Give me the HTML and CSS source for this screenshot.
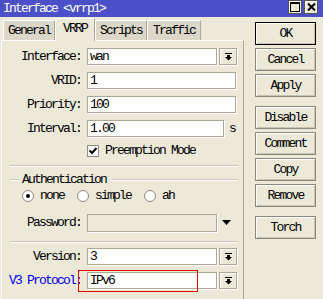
FILE: index.html
```html
<!DOCTYPE html>
<html lang="en">
<head>
  <meta charset="UTF-8">
  <title>Interface &lt;vrrp1&gt;</title>
  <link rel="stylesheet" href="styles.css">
</head>
<body>
  <div class="window">
    <div class="titlebar">
      <span class="title">Interface &lt;vrrp1&gt;</span>
      <div class="win-btns">
        <span class="wbtn">
          <svg width="10" height="10" viewBox="0 0 10 10"><rect x="0.5" y="0.5" width="9" height="9" fill="none" stroke="#000"/><rect x="0" y="0" width="10" height="2" fill="#000"/></svg>
        </span>
        <span class="wbtn">
          <svg width="9" height="8" viewBox="0 0 9 8"><path d="M1 0.5 L8 7.5 M8 0.5 L1 7.5" stroke="#000" stroke-width="2"/></svg>
        </span>
      </div>
    </div>

    <div class="main">
      <div class="left">
        <div class="tabs">
          <div class="tab tab-general">General</div>
          <div class="tab tab-vrrp active">VRRP</div>
          <div class="tab tab-scripts">Scripts</div>
          <div class="tab tab-traffic">Traffic</div>
        </div>

        <div class="panel">
          <div class="row">
            <label>Interface:</label>
            <div class="field short">wan</div>
            <div class="dd">
              <svg width="7" height="8" viewBox="0 0 7 8"><rect x="0" y="0" width="7" height="1" fill="#000"/><rect x="2" y="2" width="3" height="2" fill="#000"/><path d="M0 4 H7 L3.5 7.5 Z" fill="#000"/></svg>
            </div>
          </div>
          <div class="row">
            <label>VRID:</label>
            <div class="field">1</div>
          </div>
          <div class="row">
            <label>Priority:</label>
            <div class="field">100</div>
          </div>
          <div class="row">
            <label>Interval:</label>
            <div class="field interval">1.00</div>
            <span class="unit">s</span>
          </div>
          <div class="row check-row">
            <span class="checkbox">
              <svg width="12" height="12" viewBox="0 0 12 12"><path d="M2.5 5.5 L5 8 L9.5 3" fill="none" stroke="#000" stroke-width="2"/></svg>
            </span>
            <span>Preemption Mode</span>
          </div>

          <div class="sep"></div>

          <div class="group-head">
            <span class="line lead"></span>
            <span class="group-title">Authentication</span>
            <span class="line"></span>
          </div>
          <div class="radios">
            <span class="radio on"><i></i></span><span class="radio-label">none</span>
            <span class="radio"></span><span class="radio-label">simple</span>
            <span class="radio"></span><span class="radio-label">ah</span>
          </div>

          <div class="row pass-row">
            <label>Password:</label>
            <div class="field short disabled"></div>
            <span class="arrow-only">
              <svg width="9" height="5" viewBox="0 0 9 5"><path d="M0 0 H9 L4.5 5 Z" fill="#000"/></svg>
            </span>
          </div>

          <div class="sep sep-low"></div>

          <div class="row">
            <label>Version:</label>
            <div class="field short">3</div>
            <div class="dd">
              <svg width="7" height="8" viewBox="0 0 7 8"><rect x="0" y="0" width="7" height="1" fill="#000"/><rect x="2" y="2" width="3" height="2" fill="#000"/><path d="M0 4 H7 L3.5 7.5 Z" fill="#000"/></svg>
            </div>
          </div>
          <div class="row">
            <label class="blue">V3 Protocol:</label>
            <div class="field short">IPv6</div>
            <div class="dd">
              <svg width="7" height="8" viewBox="0 0 7 8"><rect x="0" y="0" width="7" height="1" fill="#000"/><rect x="2" y="2" width="3" height="2" fill="#000"/><path d="M0 4 H7 L3.5 7.5 Z" fill="#000"/></svg>
            </div>
            <span class="highlight"></span>
          </div>
        </div>
      </div>

      <div class="buttons">
        <button class="btn default">OK</button>
        <button class="btn">Cancel</button>
        <button class="btn">Apply</button>
        <button class="btn spaced">Disable</button>
        <button class="btn">Comment</button>
        <button class="btn">Copy</button>
        <button class="btn">Remove</button>
        <button class="btn spaced">Torch</button>
      </div>
    </div>
  </div>
</body>
</html>
```

FILE: styles.css
```css
:root {
  --face: #ece9d8;
  --tab-face: #dcd8c9;
  --shade: #aca899;
  --title-blue: #4b50c8;
  --mono: "Liberation Mono", "Courier New", monospace;
}

* {
  margin: 0;
  padding: 0;
  box-sizing: border-box;
}

body {
  width: 323px;
  height: 299px;
  overflow: hidden;
  background: var(--face);
  font-family: var(--mono);
  font-size: 13px;
  letter-spacing: -1.8px;
  color: #000;
}

.window {
  height: 299px;
  display: flex;
  flex-direction: column;
}

/* title bar */
.titlebar {
  height: 17px;
  background: var(--title-blue);
  display: flex;
  align-items: center;
  justify-content: space-between;
  padding-left: 3px;
  padding-right: 5px;
}

.title {
  color: #fff;
  line-height: 17px;
}

.win-btns {
  display: flex;
  gap: 2px;
  align-self: flex-start;
}

.wbtn {
  width: 14px;
  height: 14px;
  background: var(--face);
  border: 1px solid #555;
  box-shadow: inset 1px 1px #fff;
  display: flex;
  align-items: center;
  justify-content: center;
}

/* body */
.main {
  flex: 1;
  display: flex;
}

.left {
  width: 244px;
  display: flex;
  flex-direction: column;
  padding-top: 1px;
}

.tabs {
  height: 22px;
  display: flex;
  align-items: flex-end;
  padding-left: 3px;
  position: relative;
  z-index: 1;
}

.tab {
  height: 20px;
  line-height: 19px;
  text-align: center;
  background: var(--tab-face);
  border-top: 1px solid #fff;
  border-left: 1px solid #fff;
  border-right: 1px solid var(--shade);
}

.tab-general { width: 52px; }
.tab-vrrp { width: 40px; }
.tab-scripts { width: 52px; }
.tab-traffic { width: 54px; }

.tab.active {
  height: 23px;
  margin-bottom: -1px;
  background: var(--face);
  line-height: 20px;
}

.panel {
  flex: 1;
  margin-left: 1px;
  border-top: 1px solid #fff;
  border-left: 1px solid #fff;
  border-right: 1px solid var(--shade);
  padding-top: 7px;
  display: flex;
  flex-direction: column;
}

.row {
  height: 17px;
  display: flex;
  align-items: center;
  margin-bottom: 7px;
  position: relative;
}

.row label {
  width: 79px;
  margin-right: 6px;
  text-align: right;
}

.row label.blue {
  color: #0000f0;
}

.field {
  width: 149px;
  height: 17px;
  line-height: 15px;
  padding-left: 2px;
  background: #fff;
  border: 1px solid var(--shade);
  box-shadow: 1px 1px 0 #fff;
}

.field.short { width: 130px; }
.field.interval { width: 137px; }

.field.disabled {
  background: var(--face);
  height: 18px;
}

.unit {
  margin-left: 5px;
}

.dd {
  width: 18px;
  height: 17px;
  margin-left: 2px;
  background: var(--face);
  border: 1px solid var(--shade);
  box-shadow: inset 1px 1px #fff, 1px 1px 0 #fff;
  display: flex;
  align-items: center;
  justify-content: center;
}

.arrow-only {
  margin-left: 5px;
  display: flex;
}

.check-row {
  height: 13px;
  margin-bottom: 0;
  padding-left: 85px;
  gap: 6px;
}

.checkbox {
  width: 12px;
  height: 12px;
  background: #fff;
  border: 1px solid #8e8c80;
  display: flex;
}

.checkbox svg {
  margin: -1px;
}

.sep {
  height: 2px;
  margin: 8px 5px 0 8px;
  border-top: 1px solid #cac7b8;
  border-bottom: 1px solid #fff;
}

.group-head {
  height: 13px;
  margin: 6px 5px 0 8px;
  display: flex;
  align-items: center;
  gap: 3px;
}

.group-head .line {
  flex: 1;
  height: 2px;
  border-top: 1px solid #cac7b8;
  border-bottom: 1px solid #fff;
}

.group-head .line.lead {
  flex: 0 0 9px;
}

.group-title {
  padding: 0 3px 0 0;
}

.radios {
  height: 13px;
  margin: 3px 0 0 20px;
  display: flex;
  align-items: center;
}

.radio {
  width: 12px;
  height: 12px;
  border-radius: 50%;
  background: #fff;
  border: 1px solid #8e8c80;
  margin-right: 6px;
  display: flex;
  align-items: center;
  justify-content: center;
}

.radio i {
  width: 4px;
  height: 4px;
  border-radius: 50%;
  background: #000;
}

.radio-label {
  margin-right: 13px;
}

.pass-row {
  margin-top: 12px;
  margin-bottom: 0;
}

.sep-low {
  margin-top: 10px;
}

.sep-low + .row {
  margin-top: 5px;
}

.highlight {
  position: absolute;
  left: 76px;
  top: -2px;
  width: 120px;
  height: 22px;
  border: 1px solid #e80000;
}

/* right buttons */
.buttons {
  width: 61px;
  margin-left: 11px;
  padding-top: 5px;
  display: flex;
  flex-direction: column;
  gap: 3px;
}

.btn {
  height: 23px;
  font-family: var(--mono);
  font-size: 13px;
  letter-spacing: -1.8px;
  background: var(--face);
  border: 1px solid #8a887c;
  box-shadow: inset 1px 1px #fff, inset -1px -1px #c7c4b4;
  color: #000;
}

.btn.default {
  border-color: #000;
}

.btn.spaced {
  margin-top: 6px;
}
```
